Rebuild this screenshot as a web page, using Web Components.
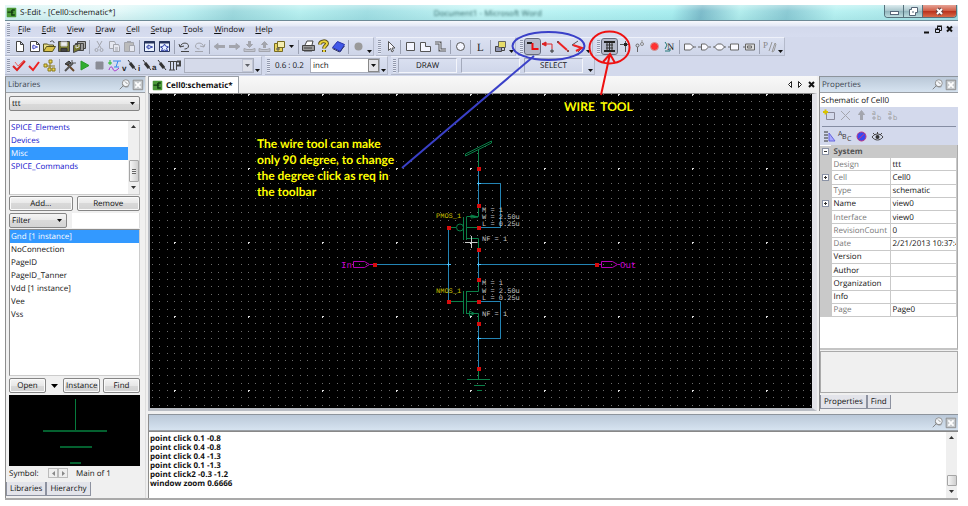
<!DOCTYPE html>
<html lang="en">
<head>
<meta charset="utf-8">
<title>S-Edit - [Cell0:schematic*]</title>
<style>
html{height:100%}
body{margin:0;min-height:100%;display:flex;background:#fff;font:8px/13px "Open Sans","Noto Sans",sans-serif;color:#111;text-rendering:geometricPrecision}
edit-window{flex:1;margin:5px 10px 6px 5px}
</style>
</head>
<body>
<edit-window></edit-window>
<script>
const K='#444',G='#a3a5ad';
const s=(d,c=K,w=1,f='none')=>`<path d="${d}" stroke="${c}" stroke-width="${w}" fill="${f}"/>`;
const ICONS={
 file:s('M4.5 2.5h4l3 3v7h-7zM8.5 2.5v3h3',K,1,'#fff'),
 cellfile:s('M3.500 2.500h6l3 3v7h-9zM9.500 2.500v3h3',K,1,'#fff')+s('M5 8h1M10 8h1M6 6v4l4-2z','#4a50c8'),
 open:s('M1.500 12v-7h4l1 1h5v2','#55501c',1,'#e9df8c')+s('M1.500 12.500l3-5h9l-3 5z','#55501c',1,'#d9c24a')+s('M8 3c2-2 4-1 4 1'),
 save:s('M1.500 2.500h11v10h-11z',K,1,'#77782f')+s('M4 3h6v4h-6z','#ccc',1,'#eee')+s('M4 9.500h6v3h-6z','#333',1,'#444'),
 saveall:s('M5.500 2.500h8v7h-8z',K,1,'#aaa')+s('M3.500 4.500h8v7h-8z',K,1,'#999')+s('M1.500 6.500l7-2v6l-7 3z',K,1,'#77782f')+s('M4 6v3l3-1v-3','#ddd'),
 cut:s('M5 2l4 7M10 2l-4 7',G)+`<circle cx="4.500" cy="11" r="1.500" stroke="${G}" fill="none"/><circle cx="9.500" cy="11" r="1.500" stroke="${G}" fill="none"/>`,
 copy:s('M2.500 2.500h5l1 2v5h-6z',G,1,'#e6e8f0')+s('M6.500 5.500h5l1 2v5h-6z',G,1,'#e6e8f0')+s('M8 9h3M8 11h3',G),
 paste:s('M2.500 3.500h9v9h-9z',G,1,'#bbb')+s('M5 3h4',G,2)+s('M7.500 6.500h5v6h-5z',G,1,'#e6e8f0'),
 view1:s('M2.500 2.500h10v10h-10z','#26345c',1,'#e9f2ff')+s('M2 3.500h11','#26345c',2)+s('M4 8h2M9 8h2M6 6v4l4-2z','#34a'),
 view2:s('M2.500 2.500h10v10h-10z','#26345c',1,'#e9f2ff')+s('M2 3.500h11','#26345c',2)+s('M7.500 5l1 2 3 1-2 1 1 3-3-1-3 1 1-3-2-1 3-1z','#34a'),
 undo:s('M3.500 8c0-5 8-5 8-1 0 2-2 3-4 3M2 5l1 3 4-1M4 12.500h8',K),
 redo:s('M11.500 8c0-5-8-5-8-1 0 2 2 3 4 3M13 5l-1 3-4-1M3 12.500h8',G),
 back:s('M4 7.500h9',G,3)+s('M6 4.500l-4 3 4 3z',G,1,G),fwd:s('M2 7.500h9',G,3)+s('M9 4.500l4 3-4 3z',G,1,G),
 down:s('M7.500 2v4',G,3)+s('M4.500 5.500h6l-3 3z',G,1,G)+s('M2 9.500l3 1h5l3-1v3h-11z',G,1,'#c2c5cf'),up:s('M7.500 9v-4',G,3)+s('M4.500 5.500h6l-3-3z',G,1,G)+s('M2 9.500l3 1h5l3-1v3h-11z',G,1,'#c2c5cf'),
 pages:s('M2.500 4.500h8v8h-8z','#776b20',1,'#e8d45e')+s('M5.500 2.500h7v6h-7z','#776b20',1,'#f5eeb0')+s('M4 10h4M6 8v4','#555'),
 print:s('M4 6l2-4h6l-1 4',K,1,'#fff')+s('M1.500 6.500h12v5h-12z',K,1,'#999')+s('M3 9h8M3 12h8',K),
 help:s('M4 5.500c0-4 7-4 7-1 0 2-3 2-3 5M8 11v2','#5c521c',4)+s('M4 5.500c0-4 7-4 7-1 0 2-3 2-3 5M8 11v2','#ecd43a',2),
 book:s('M1.500 8.500l5-6 7 3-4 7z','#2530a8',1,'#4058e8')+s('M1.500 9.500l7 3.500 5-6','#30366c'),
 dot:'<circle cx="7.500" cy="7.500" r="4" fill="#9a9a9a"/>',
 arrow:s('M5.500 2.500v9l2-2 1.500 3.500 1.500-1-1.500-3h3z','#555',1,'#f8f8ff'),
 square:s('M3.500 3.500h8v8h-8z','#555',1,'#f4f6ff'),
 poly:s('M2.500 3.500h5v4h5v5h-10z','#555',1,'#f4f6ff'),
 path:s('M2 4h5v7h6','#555',3)+s('M2 4h5v7h6','#e8ebf5',1),
 circle:'<circle cx="7.500" cy="7.500" r="4" fill="#f4f6ff" stroke="#555"/>',
 label:'<text x="4" y="12" font-family="Liberation Serif,serif" font-size="11" fill="#222">L</text>',
 paste2:s('M2.500 7.500h6v5h-6z','#444',1,'#8f94b0')+s('M5.500 2.500h7v6h-7z','#666',1,'#e6dc6a')+s('M8.500 8.500h3v3h-3z','#444',1,'#c8cbe0'),
 w90:s('M2 4h5','#222',2)+s('M7.500 4v6h6','#e11',2),
 w90b:s('M2 5h10v5','#d22',1)+s('M6 3v4l-4-2z','#d22',1,'#d22')+s('M11 11h2v2h-2z','#333'),
 w45:s('M3 3l9 8','#e22',2)+s('M2 2h2v2h-2z','#333',0,'#844')+s('M12 11h2v2h-2z','#333',0,'#844'),
 wany:s('M8 2l-6 4 10 3-4 4','#555')+s('M3 6l9 3-6 3','#e22',2),
 wire:s('M2 3h11M2 12h11','#222',2)+s('M5 4v7M7.500 4v7M10 4v7M4 6h7M4 9h7','#333'),
 junction:s('M3 5.500h9M8.500 2v11','#555')+s('M7 5.500h3','#222',3),
 port:s('M5.500 8v5','#666')+'<circle cx="5.500" cy="6.500" r="1.500" fill="none" stroke="#666"/><circle cx="10" cy="5" r="1.500" fill="none" stroke="#888"/>'+s('M10 1v2','#999'),
 solder:'<circle cx="7.500" cy="7.500" r="4" fill="#f33" stroke="#c99"/>',
 net:s('M3 3l2 3-2 4M3 12h5v-3','#277')+'<text x="5" y="11" font-family="Liberation Serif,serif" font-size="10" fill="#222">N</text>',
 pin:s('M2.500 5h6l3 3-3 3h-6zM11 8h3','#666',1,'#fafaff'),
 pout:s('M1 8h3M4.500 5h4l3 3-3 3h-4zM12 8h2','#666',1,'#fafaff'),
 pio:s('M2.500 8l3-3h4l3 3-3 3h-4zM1 8h2M12 8h2','#666',1,'#fafaff'),
 pother:s('M1 8h3M3.500 5h8v6h-8z','#666',1,'#fafaff'),
 pglob:s('M1 8h2M3.500 5h9v6h-9zM5.500 7h4v2h-4z','#666',1,'#ddd'),
 prop:'<text x="1" y="9" font-family="Liberation Serif,serif" font-size="9" fill="#888">P</text>'+s('M7 12l3-9M10 13l3-9 1 1-2 7z','#999'),
 check2:s('M1 8l4 4 8-9','#d22',2)+s('M3 4l3 4 6-6','#e66',1),
 check:s('M2 8l4 4 6-8','#e22',2),
 hier:s('M3 8h10M8 3v9','#8a7a20')+s('M2 6h3v3h-3zM7 2h3v3h-3zM10 10h3v3h-3zM6 10h3v3h-3z','#8a7a20',1,'#ecd64a'),
 tools:s('M5 6l7 7','#6b4a2a',2)+s('M3 6l4-3 2 2-3 2z','#333',1,'#555')+s('M3 13l8-8','#555',2)+s('M10 2v3h4','#555'),
 run:s('M4 3v9l8-4.500z','#2a9a2a',1,'#2fae2f'),
 stop:s('M4 4h7v7h-7z','#8b8d96',1,'#8b8d96'),
 wave:s('M6 3h8M11 3l-2 6M7 9h5','#38e',1)+s('M3 2v5M1 5h4','#2b2',1)+s('M2 12c1-4 3-4 4-1s3 2 6-1','#a3c',1),
 pv:s('M8 5l4 5','#333',3)+s('M6 2l8 10','#333')+'<text x="0" y="13" font-family="Liberation Sans,sans-serif" font-weight="bold" font-size="8" fill="#222">v</text>',
 pi:s('M8 5l4 5','#333',3)+s('M6 2l8 10','#333')+'<text x="1" y="13" font-family="Liberation Sans,sans-serif" font-weight="bold" font-size="8" fill="#222">i</text>',
 pq:s('M8 5l4 5','#333',3)+s('M6 2l8 10','#333')+'<text x="0" y="12" font-family="Liberation Sans,sans-serif" font-weight="bold" font-size="8" fill="#222">a</text>',
 tp:s('M1 3.500h8M3.500 3v9M6.500 3v9M2 12h6M9.500 3v9','#444')+s('M10 3.500h3v4h-3','#444',2),
 pnew:s('M4.500 4.500h8v7h-8z','#889',1)+s('M1 4h5M3.500 1.500v5','#d8c400',2),
 del:s('M3 3l9 9M12 3l-9 9',G,1),
 upa:s('M7.500 12v-6',G,3)+s('M4.500 6.500h6l-3-4z',G,1,G),
 ab:'<text x="2" y="7" font-size="7" fill="#999">a</text><text x="7" y="12" font-size="7" fill="#999">b</text>'+s('M2 10h4M4 8v4',G),
 cat:s('M2 3h4M2 6h4M2 9h4M2 12h4','#333',1)+s('M7 4v8h6z','#66d',1,'#aaf'),
 abc:'<text x="0" y="7" font-size="7" fill="#333">A</text><text x="4" y="10" font-size="7" fill="#333">B</text><text x="9" y="12" font-size="7" fill="#333">C</text>',
 no:'<circle cx="7.500" cy="7.500" r="4.500" fill="#3a48f0" stroke="#c03a80"/>'+s('M4 11l7-7','#c03a80'),
 eye:s('M2 8c3-4 8-4 11 0-3 4-8 4-11 0zM3 4l2 2M7.500 3v2M12 4l-2 2','#444')+'<circle cx="7.500" cy="8" r="2" fill="#333"/>',
 doc:'<rect x="1" y="1" width="13" height="13" rx="1" fill="#4c9a38"/>'+s('M2 7h8M8 4v7h4M8 4h4','#123c10',2),
 pinup:s('M2 13l4-4','#777')+'<circle cx="9" cy="6" r="4" fill="#f2f5f8" stroke="#888"/>'+s('M5 7c1 3 4 4 7 3M8 4l3 3','#888'),
 close:s('M2.500 2.500h11v11h-11z','#888',1,'#c6cacd')+s('M5 5l6 6M11 5l-6 6','#fff',2)
};
const svg=(n,z=15)=>`<svg width="${z}" height="${z}" viewBox="0 0 15 15" aria-hidden="true">${ICONS[n]}</svg>`;
const BASE=`*{box-sizing:border-box}button,select,input{font:inherit;color:inherit;margin:0;padding:0;text-rendering:inherit}svg{display:block}`;
function define(name,html){
 customElements.define(name,class extends HTMLElement{
  connectedCallback(){
   if(this.shadowRoot)return;
   const t=document.createElement('template');
   t.innerHTML=`<style>${BASE}</style>`+(typeof html==='function'?html(this):html);
   this.attachShadow({mode:'open'}).append(t.content.cloneNode(true));
  }});
}
define('tool-button',e=>`<style>:host{display:block;flex:none;width:15px;height:15px}
button{display:block;width:15px;height:15px;border:0;background:none}svg{overflow:visible}
:host([pressed]) button{background:#b4b9ca;outline:1px solid #666b7c;border-radius:2px}</style>
<button type="button" aria-label="${e.getAttribute('icon')}">${svg(e.getAttribute('icon'))}</button>`);
define('push-button',`<style>:host{display:block}button{width:100%;height:15px;line-height:12px;border:1px solid #858585;border-radius:2px;background:linear-gradient(#f4f4f4,#e8e8e8 50%,#d9d9d9 50%,#d2d2d2);box-shadow:inset 0 0 0 1px #fafafa}</style><button type="button"><slot></slot></button>`);
define('drop-down',e=>`<style>:host{display:grid;height:15px}select,svg{grid-area:1/1}
select{appearance:none;width:100%;min-width:0;height:100%;border:1px solid #858585;border-radius:2px;padding:0 2px;line-height:12px;background:linear-gradient(#f4f4f4,#e8e8e8 50%,#dadada 50%,#d4d4d4)}
svg{justify-self:end;align-self:center;margin-right:3px;pointer-events:none}
:host([flat]) select{background:#fff;border-color:#a9aebc;border-radius:0}
:host([flat]) svg{background:#e4e4e8;outline:1px solid #888;margin-right:2px}
:host([off]) select{background:#d5daea}:host([off]) svg{outline-color:#b5bac9;opacity:.6}</style>
<select aria-label="${e.getAttribute('label')}"><option>${e.getAttribute('value')||''}</option></select>
<svg width="9" height="11" viewBox="0 0 9 11" aria-hidden="true"><path d="M2 4h5l-2.500 3z" fill="#111"/></svg>`);
define('tool-bar',`<style>:host{display:flex;align-items:center;height:19px;border:solid;border-width:1px 1px 1px 0;border-color:#eef1fa #b4bacb #b4bacb #eef1fa;background:linear-gradient(#dbe1f2,#ced5e8)}
i{flex:none;width:3px;height:14px;margin:0 2px;background:repeating-linear-gradient(#9299ad 0 1px,#e6eaf6 1px 2px)}</style><i></i><slot></slot>`);
define('tool-sep',`<style>:host{flex:none;width:1px;height:14px;margin:0 2px;background:#9ca2b4}</style>`);
define('more-mark',`<style>:host{flex:none;width:7px;height:15px;display:flex;align-items:end;justify-content:center}:host([mid]){width:9px;align-items:center}</style><svg width="5" height="5" viewBox="0 0 5 5"><path d="M0 1h5l-2.500 3z" fill="#111"/></svg>`);
define('status-box',`<style>:host{flex:none;width:59px;height:15px;margin-right:4px;border:1px solid;border-color:#a4aabc #f3f5fb #f3f5fb #a4aabc;text-align:center;line-height:13px}</style><slot></slot>`);

define('title-bar',`<style>:host{display:flex;position:relative;height:16px;align-items:start;color:#111;border-bottom:1px solid #6d8a96;
background:linear-gradient(#fff5,#fff0 40%,#4aa0a820),linear-gradient(100deg,#d8f3f3 0,#e3f8f8 12%,#bff0f2 19%,#9fd9de 24%,#b9f0f0 31%,#a3dfe4 38%,#c5f6f6 50%,#aaeef0 70%,#7ebccb 73%,#b5eeee 77%,#8dcbd5 82%,#b9f2f2 87%,#a5e0e5)}
h1{font:inherit;line-height:16px;margin:0 0 0 3px;flex:1}
p{position:absolute;left:45%;top:2px;margin:0;filter:blur(1px);color:#366}
b{flex:none;width:11px;height:11px;margin:2px 0 0 1px}
div{display:flex;height:13px;margin-right:1px;border:1px solid #55717b;border-top:0;border-radius:0 0 4px 4px;overflow:hidden}
button{width:19px;height:12px;border:0;border-right:1px solid #55717b;background:linear-gradient(#dcecef,#a7c4ca 50%,#8fb3bb 50%,#bcdcde);display:grid;place-items:center}
button:last-child{width:33px;border:0;background:linear-gradient(#e6a396,#cf5a42 50%,#b8301a 50%,#d86a48)}</style>
<b>${svg('doc',11)}</b><h1>S-Edit - [Cell0:schematic*]</h1><p>Document1 - Microsoft Word</p>
<div><button type="button" aria-label="Minimize"><svg width="11" height="9"><rect x="1.500" y="4.500" width="8" height="3" fill="#fff" stroke="#567"/></svg></button>
<button type="button" aria-label="Restore"><svg width="11" height="9"><path d="M3.500.5h6v5h-2v3h-6v-6h2z" fill="#fff" stroke="#567"/><path d="M4 5h2" stroke="#567"/></svg></button>
<button type="button" aria-label="Close"><svg width="11" height="9"><path d="M3 2l5 5M8 2l-5 5" stroke="#644" stroke-width="4"/><path d="M3 2l5 5M8 2l-5 5" stroke="#fff" stroke-width="2"/></svg></button></div>`);

define('menu-bar',`<style>:host{display:flex;align-items:center;height:16px;background:linear-gradient(#f7f9fd 0,#e3e8f5 5px,#d3d9ec 6px,#d6dcef)}
i{flex:none;width:3px;height:13px;margin:0 2px;background:repeating-linear-gradient(#9299ad 0 1px,#e6eaf6 1px 2px)}
nav{display:flex;flex:1;gap:11px;padding-left:6px}a{color:#111;text-decoration:none}
svg{margin-right:3px}</style><i></i><nav>${['File','Edit','View','Draw','Cell','Setup','Tools','Window','Help'].map(w=>`<a href="#${w}"><u>${w[0]}</u>${w.slice(1)}</a>`).join('')}</nav>
<svg width="32" height="9" viewBox="0 0 32 9"><path d="M1 7.500h5M24 1.500l5 5M29 1.500l-5 5" fill="none" stroke="#111" stroke-width="2"/><path d="M12.500 4.500h4v3h-4zM14.500 4V1.500h4v4h-2M12 4h5M14 1h5" fill="none" stroke="#111"/></svg>`);

const B=l=>l.split(' ').map(n=>n==='|'?'<tool-sep></tool-sep>':n==='^'?'<more-mark></more-mark>':n==='v'?'<more-mark mid></more-mark>':n[0]==='*'?`<tool-button pressed icon="${n.slice(1)}"></tool-button>`:`<tool-button icon="${n}"></tool-button>`).join('');
define('tool-area',`<style>:host{display:block;background:#d3d9ec;padding-bottom:1px}div{display:flex;gap:2px}div+div{gap:3px}
.u{width:31px;margin:0 4px 0 3px;white-space:nowrap}.c1{width:70px;margin:0 0 0 2px}.c2{width:70px}</style>
<div><tool-bar>${B('file cellfile open save saveall | cut copy paste | view1 view2 | undo redo | back fwd down up pages v | print help book | dot ^')}</tool-bar>
<tool-bar>${B('arrow | square poly path | circle | label | paste2 ^')}</tool-bar>
<tool-bar>${B('*w90 w90b w45 wany ^')}</tool-bar>
<tool-bar>${B('*wire junction port solder net | pin pout pio pother pglob | prop ^')}</tool-bar></div>
<div><tool-bar>${B('check2 check hier | tools run stop wave pv pi pq tp')}<drop-down class="c1" flat off label="Run"></drop-down><more-mark></more-mark></tool-bar>
<tool-bar><span class="u">0.6 : 0.2</span><drop-down class="c2" flat label="Unit" value="inch"></drop-down><more-mark></more-mark></tool-bar>
<tool-bar><status-box>DRAW</status-box><status-box></status-box><status-box>SELECT</status-box><more-mark></more-mark></tool-bar></div>`);

define('dock-panel',e=>`<style>:host{display:flex;flex-direction:column;min-width:0;min-height:0;border-top:1px solid #8d949c;border-left:1px solid #8d8d8d;background:#f0f0f0}
header{display:flex;flex:none;height:16px;align-items:center;padding:0 1px 0 2px;background:linear-gradient(#bac8d8,#d6e3f0);border-bottom:1px solid #9a9fa5;color:#3d4650}
h2{flex:1;margin:0;font:inherit}button{border:0;background:none;width:13px}</style>
<header><h2>${e.getAttribute('heading')||''}</h2><button type="button" aria-label="Pin">${svg('pinup',13)}</button><button type="button" aria-label="Close">${svg('close',13)}</button></header><slot></slot>`);
define('scroll-rail',`<style>:host{display:flex;flex-direction:column;flex:none;width:11px;background:#efefef;align-items:center}
svg{margin:4px 0}i{flex:1}b{width:10px;height:var(--thumb,22px);border:1px solid #a5a5a5;border-radius:1px;background:linear-gradient(90deg,#f5f5f5,#cfcfcf);display:grid;place-items:center}b:after{content:"";width:4px;height:5px;background:repeating-linear-gradient(#666 0 1px,#eee 1px 2px)}:host([plain]) b:after{display:none}</style>
<svg width="5" height="4"><path d="M0 3h5l-2.500-3z" fill="#333"/></svg><i></i><b></b><svg width="5" height="4"><path d="M0 0h5l-2.500 3z" fill="#333"/></svg>`);
define('tab-strip',e=>{const[a,b]=e.getAttribute('tabs').split(',');return`<style>:host{display:flex;flex:none;align-items:start;height:16px;background:#f0f0f0}button{border:1px solid #8d92a0;border-top:0;background:#e3e4ea;height:14px;padding:0 3px;line-height:12px}button:first-child{background:#fff;border-left:0;height:16px;padding:0 5px 0 4px}</style><button type="button">${a}</button><button type="button">${b}</button>`});

define('library-panel',`<style>:host{display:flex;flex-direction:column;min-height:0;flex:1}
.body{display:flex;flex-direction:column;flex:1;padding:3px 5px 0 3px;min-height:0}
.list{display:flex;background:#fff;border:1px solid #8b8b8b;border-right-color:#ccc;border-bottom-color:#ccc}
ul{flex:1;margin:0;padding:0;list-style:none;min-width:0}li{height:13px;line-height:13px;padding-left:1px}
.libs{margin-top:9px;height:75px;flex:none}.libs li{color:#11c}.libs li.on,.on{background:#3399ff;color:#fff!important}
.row{display:grid;grid-template-columns:1fr 1fr;gap:4px;margin:1px 0 2px}
.filter{display:grid;grid-template-columns:58px 1fr;gap:5px}.filter input{width:100%;min-width:0;height:15px;border:0;background:#fff;border-right:1px solid #ddd}
.cells{flex:1;margin-top:1px}
.acts{display:grid;grid-template-columns:37px 12px 37px 37px;column-gap:2px;margin:2px 0;justify-content:space-between;align-items:center}
.acts svg{justify-self:center}.prev{height:71px;flex:none;background:#000}.prev svg{width:100%;height:100%}
.sym{display:flex;align-items:center;height:16px;padding:0 0 2px 3px}.sym span:first-child{width:39px}
.sym button{width:10px;height:10px;border:1px solid #bbb;background:#eee;display:grid;place-items:center}.sym span:last-child{margin-left:8px}</style>
<div class="body"><drop-down label="Design" value="ttt"></drop-down>
<div class="list libs"><ul><li>SPICE_Elements</li><li>Devices</li><li class="on">Misc</li><li>SPICE_Commands</li></ul><scroll-rail></scroll-rail></div>
<div class="row"><push-button>Add...</push-button><push-button>Remove</push-button></div>
<div class="filter"><drop-down label="Filter mode" value="Filter"></drop-down><input type="text" aria-label="Filter"></div>
<div class="list cells"><ul><li class="on">Gnd [1 instance]</li><li>NoConnection</li><li>PageID</li><li>PageID_Tanner</li><li>Vdd [1 instance]</li><li>Vee</li><li>Vss</li></ul></div>
<div class="acts"><push-button>Open</push-button><svg width="7" height="5"><path d="M0 1h7l-3.500 4z"/></svg><push-button>Instance</push-button><push-button>Find</push-button></div>
<div class="prev"><svg viewBox="0 0 131 71" aria-hidden="true"><path d="M66.500 4v32" stroke="#067a3c"/><path d="M34 36h64M51 52h32M61 68h11" stroke="#04602f" stroke-width="2"/></svg></div></div>
<div class="sym"><span>Symbol:</span><button type="button" aria-label="Previous"><svg width="3" height="5"><path d="M3 0v5l-3-2.500z" fill="#888"/></svg></button><button type="button" aria-label="Next"><svg width="3" height="5"><path d="M0 0v5l3-2.500z" fill="#888"/></svg></button><span>Main of 1</span></div>
<tab-strip tabs="Libraries,Hierarchy"></tab-strip>`);

let dots='';
for(let i=0;i<10;i++)for(let j=0;j<10;j++)if(i||j)dots+=`<rect x="${Math.round(i*7.4)}" y="${Math.round(j*7.4)}" width="1" height="1"/>`;
const red=(x,y)=>`<rect x="${x-2}" y="${y-2}" width="4" height="4" fill="#d80c0c"/>`;
const jn=(x,y)=>`<path d="M${x-1} ${y}h4M${x+.5} ${y-2}v4" stroke="#4cc4ff"/>`;
const T=(x,y,t,c='')=>`<text x="${x}" y="${y}" class="${c}">${t}</text>`;
define('schematic-view',`<style>:host{display:flex;flex-direction:column;min-width:0;min-height:0;background:#f0f0f0}
header{display:flex;height:17px;flex:none;align-items:center;background:linear-gradient(#f8f8f8,#eee)}
h2{display:flex;gap:3px;align-items:center;font:inherit;font-weight:bold;margin:0 auto 0 0;height:17px;padding:0 5px 0 3px;background:#fff;border:1px solid #9a9fa5;border-bottom:0}
.view{flex:1;border:2px solid #b9bdc4;border-top-color:#888;border-width:1px 5px 3px 2px;border-right-color:#e3e3e8;background:#000;min-height:0;overflow:hidden}
.view svg{width:100%;height:100%}
text{font:7px "Liberation Mono",monospace;fill:#c4c4c4;white-space:pre}text.y{fill:#c8c000}text.p{fill:#d000d0;font-size:9px}
.g,.w,.m{fill:none;stroke:#0a8048}.w{stroke:#2384b4}.m{stroke:#b400b4}</style>
<header><h2>${svg('doc',11)}Cell0:schematic*</h2><svg width="30" height="9"><path d="M4.500 1.500v6l-3-3zM11.500 1.500v6l3-3z" fill="#fff" stroke="#222"/><path d="M22 2l5 5M27 2l-5 5" stroke="#111" stroke-width="2"/></svg></header>
<div class="view"><svg role="img" aria-label="CMOS inverter schematic"><defs><pattern id="grid" x="24" y="0" width="74" height="74" patternUnits="userSpaceOnUse"><g fill="#6c6c6c">${dots}</g><rect width="2" height="1" fill="#ddd"/><rect width="1" height="2" fill="#ddd"/></pattern></defs>
<rect width="100%" height="100%" fill="url(#grid)"/>
<g transform="translate(-150 -94)">
<path class="g" d="M465.500 154l26-13v2l-26 13zM478.500 150v18M478.500 206v10.500h-12M478 217l-7-2v3zM463.500 217v23M466.500 217v23M467 227.500h11M467 238.500h11.500v11M449 227.500h7M478.500 280v11.500h-12M463.500 291v23M466.500 291v23M449 301.500h14M467 301.500h11M467 313.500h11.500v10M469.500 311v5l5-2.500zM478.500 369v10.500M467 379.500h23M474 385.500h11M477 390.500h5"/><circle class="g" cx="460" cy="227.500" r="3.500"/>
<path class="w" d="M478.500 169v36M478.500 183.500h22v44h-22M448.500 228v73M478.500 250v29M376 264.500h73M478 264.500h118M478 301.500h22.500v37h-22M478.500 325v43"/>
<path class="m" d="M353.500 261.500h11l5 3-5 3h-11zM370 264.500h5M597 264.500h4M601.500 261.500h11l5 3-5 3h-11zM618 264.500h2"/>
${[[479,169],[479,206],[449,228],[479,228],[479,250],[375,265],[597,265],[479,280],[449,302],[479,302],[479,324],[479,369]].map(p=>red(...p)).join('')}
${jn(478,183.5)+jn(448,264.5)+jn(478,264.5)+jn(478,338.5)}
<path d="M465 242.500h12M471.500 236v12" stroke="#ccc"/>
${T(436,218,'PMOS_1','y')+T(436,293,'NMOS_1','y')+T(482,212,'M = 1')+T(482,219,'W = 2.50u')+T(482,226,'L = 0.25u')+T(482,241,'NF = 1')+T(482,285,'M = 1')+T(482,293,'W = 2.50u')+T(482,300,'L = 0.25u')+T(482,316,'NF = 1')+T(341,268,'In','p')+T(620,268,'Out','p')}
</g></svg></div>`);

const rows=[['Design','ttt'],['Cell','Cell0','+'],['Type','schematic'],['Name','view0','+'],['Interface','view0'],['RevisionCount','0'],['Date','2/21/2013 10:37:43'],['Version',''],['Author',''],['Organization',''],['Info',''],['Page','Page0']];
define('property-panel',`<style>:host{display:flex;flex-direction:column;flex:1;min-height:0}
input{border:0;height:14px;flex:none;background:#fff;padding-left:1px;width:100%}
.tb{background:#d3d9ec;height:38px;flex:none;padding:1px 2px}.tb div{display:flex;height:17px;gap:1px}.tb div+div{border-top:1px solid #858da3;margin-top:1px;padding-top:2px}
.grid{flex:1;background:#fff;border-right:1px solid #aaa;border-bottom:2px solid #c4c4c4;overflow:hidden}
table{border-collapse:collapse;table-layout:fixed;width:100%;height:172px;line-height:11px}th,td{padding:0;text-align:left;font-weight:normal;white-space:nowrap;overflow:hidden}
th,td.v{border:1px solid #c9c9c9;padding-left:2px}th{color:#777}td.x{background:#c9c9c9}thead th{background:#c9c9c9;font-weight:bold;color:#555}thead td{background:#c9c9c9}
.k th{color:#111}i{display:block;width:7px;height:7px;margin:0 2px;border:1px solid #8a92a5;background:linear-gradient(#333,#333) center/3px 1px no-repeat,#fff}i.p{background:linear-gradient(#333,#333) center/3px 1px no-repeat,linear-gradient(#333,#333) center/1px 3px no-repeat,#fff}
.desc{height:42px;flex:none;border:1px solid #aaa;margin:1px 0 2px}</style>
<input type="text" aria-label="Selection" value="Schematic of Cell0">
<div class="tb"><div>${B('pnew del upa ab ab')}</div><div>${B('cat abc no eye')}</div></div>
<div class="grid"><table><colgroup><col style="width:11px"><col style="width:59px"><col></colgroup><thead><tr><td><i></i></td><th colspan="2">System</th></tr></thead><tbody>
${rows.map(r=>`<tr${['Name','Version','Author','Organization','Info'].includes(r[0])?' class="k"':''}><td class="x">${r[2]?'<i class="p"></i>':''}</td><th>${r[0]}</th><td class="v">${r[1]}</td></tr>`).join('')}</tbody></table></div>
<div class="desc"></div><tab-strip tabs="Properties,Find"></tab-strip>`);

define('command-log',`<style>:host{display:flex;flex:1;min-height:0;background:#fff;border-top:1px solid #888;padding-right:1px;--thumb:11px}
ol{flex:1;margin:0;padding:2px 1px;list-style:none;font-weight:bold;line-height:9px}</style>
<ol>${['point click 0.1 -0.8','point click 0.4 -0.8','point click 0.4 -1.3','point click 0.1 -1.3','point click2 -0.3 -1.2','window zoom 0.6666'].map(t=>`<li>${t}</li>`).join('')}</ol><scroll-rail plain></scroll-rail>`);

define('tutorial-notes',`<style>:host{position:absolute;inset:0;pointer-events:none}svg{position:absolute;left:-5px;top:-5px;width:968px;height:420px}
p{position:absolute;margin:0;font:bold 12px/16px Lato,"Open Sans",sans-serif;color:#ff0;white-space:pre}.a{left:252px;top:131px}.b{left:559px;top:94px}</style>
<svg fill="none" stroke-width="2" aria-hidden="true"><g stroke="#3a40c8"><ellipse cx="548.500" cy="46" rx="36" ry="14"/><path d="M534 56L402 168"/></g><g stroke="#ee1111"><ellipse cx="609.500" cy="47.500" rx="20" ry="16"/><path d="M601 95l9-41M603 62l7-8 5 9"/></g></svg>
<p class="a">The wire tool can make
only 90 degree, to change
the degree click as req in
the toolbar</p><p class="b">WIRE  TOOL</p>`);

define('edit-window',`<style>:host{display:flex;flex-direction:column;position:relative;min-width:0;background:#f0f0f0;border-bottom:2px solid #a9a9a9}
main{flex:1;display:grid;grid-template-columns:141px minmax(0,1fr) 139px;grid-template-rows:minmax(0,1fr) 84px;gap:3px 2px;min-height:0}
.left{grid-row:1/3}.log{grid-column:2/4}.left{border-right:1px solid #ddd}</style>
<title-bar></title-bar><menu-bar></menu-bar><tool-area></tool-area>
<main><dock-panel class="left" heading="Libraries"><library-panel></library-panel></dock-panel>
<schematic-view></schematic-view>
<dock-panel heading="Properties"><property-panel></property-panel></dock-panel>
<dock-panel class="log"><command-log></command-log></dock-panel></main>
<tutorial-notes></tutorial-notes>`);
</script>
</body>
</html>
